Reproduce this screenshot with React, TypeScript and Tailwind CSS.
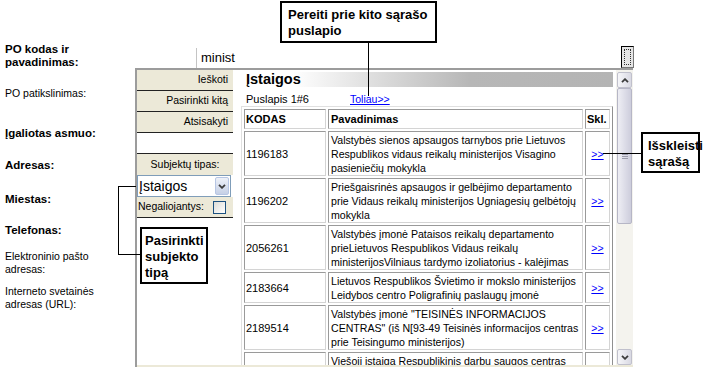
import React from "react";

type Row = {
  code: string;
  name: string[];
  link: boolean;
};

const rows: Row[] = [
  {
    code: "1196183",
    name: [
      "Valstybės sienos apsaugos tarnybos prie Lietuvos",
      "Respublikos vidaus reikalų ministerijos Visagino",
      "pasieniečių mokykla",
    ],
    link: true,
  },
  {
    code: "1196202",
    name: [
      "Priešgaisrinės apsaugos ir gelbėjimo departamento",
      "prie Vidaus reikalų ministerijos Ugniagesių gelbėtojų",
      "mokykla",
    ],
    link: true,
  },
  {
    code: "2056261",
    name: [
      "Valstybės įmonė Pataisos reikalų departamento",
      "prieLietuvos Respublikos Vidaus reikalų",
      "ministerijosVilniaus tardymo izoliatorius - kalėjimas",
    ],
    link: true,
  },
  {
    code: "2183664",
    name: [
      "Lietuvos Respublikos Švietimo ir mokslo ministerijos",
      "Leidybos centro Poligrafinių paslaugų įmonė",
    ],
    link: true,
  },
  {
    code: "2189514",
    name: [
      "Valstybės įmonė \"TEISINĖS INFORMACIJOS",
      "CENTRAS\" (iš N[93-49 Teisinės informacijos centras",
      "prie Teisingumo ministerijos)",
    ],
    link: true,
  },
  {
    code: "",
    name: ["Viešoji įstaiga Respublikinis darbų saugos centras", "", ""],
    link: false,
  },
];

function Chevron({ up }: { up?: boolean }) {
  return (
    <svg width="8" height="5" viewBox="0 0 8 5">
      <polyline
        points={up ? "1,4.2 4,1.2 7,4.2" : "1,0.8 4,3.8 7,0.8"}
        fill="none"
        stroke="#3c3c3c"
        strokeWidth="1.8"
      />
    </svg>
  );
}

function Form() {
  return (
    <div className="pl-[5px] pt-[43px]">
      <div className="flex h-[27px]">
        <div className="w-[191px] text-[11.5px] font-bold leading-[13px]">
          PO kodas ir
          <br />
          pavadinimas:
        </div>
        <div className="mt-[5px] h-[20px] w-[424px] border-l border-[#c4c4c4] pl-[4px] text-[13px] leading-[20px]">
          minist
        </div>
      </div>
      <div className="mt-[16px] text-[10.5px] leading-[14px]">PO patikslinimas:</div>
      <div className="mt-[26px] text-[11.5px] font-bold leading-[14px]">Įgaliotas asmuo:</div>
      <div className="mt-[18px] text-[11.5px] font-bold leading-[14px]">Adresas:</div>
      <div className="mt-[20px] text-[11.5px] font-bold leading-[14px]">Miestas:</div>
      <div className="mt-[17px] text-[11.5px] font-bold leading-[14px]">Telefonas:</div>
      <div className="mt-[13px] text-[10.5px] leading-[13px]">
        Elektroninio pašto
        <br />
        adresas:
      </div>
      <div className="mt-[9px] text-[10.5px] leading-[13px]">
        Interneto svetainės
        <br />
        adresas (URL):
      </div>
    </div>
  );
}

function LeftPanel() {
  return (
    <div className="w-[96px] flex flex-col text-[10.5px]">
      <div className="h-[21px] border-b border-[#222] bg-[#ece9d8] flex items-center justify-end pr-[5px]">
        Ieškoti
      </div>
      <div className="h-[21px] border-b border-[#222] bg-[#ece9d8] flex items-center justify-end pr-[5px]">
        Pasirinkti kitą
      </div>
      <div className="h-[21px] border-b border-[#222] bg-[#ece9d8] flex items-center justify-end pr-[5px]">
        Atsisakyti
      </div>
      <div className="h-[21px] border-b border-[#222]" />
      <div className="h-[21px] bg-[#ece9d8] flex items-center justify-center">
        Subjektų tipas:
      </div>
      <div className="h-[22px] border border-[#7f9db9] bg-white flex items-center pl-[1px] pr-[1px] mr-[2px]">
        <span className="flex-1 text-[14px] leading-[18px]">Įstaigos</span>
        <div className="w-[14px] h-[18px] rounded-[2px] border border-[#b7c6e4] bg-[linear-gradient(to_bottom,#eef1f8,#c6d0e6)] flex items-center justify-center">
          <Chevron />
        </div>
      </div>
      <div className="h-[21px] border-b border-[#222] bg-[#ece9d8] flex items-center pl-[1px]">
        <span>Negaliojantys:</span>
        <span className="ml-[9px] w-[13px] h-[13px] border border-[#1c5180] bg-[linear-gradient(135deg,#dcdcd7,#ffffff)]" />
      </div>
    </div>
  );
}

function Content() {
  return (
    <div className="w-[383px] h-full overflow-hidden flex flex-col">
      <div className="mt-[2px] ml-[2px] mr-[3px] h-[15px] bg-[linear-gradient(to_right,#ffffff_15%,#b7b7b7_62%,#b4b4b4)] pl-[11px] text-[14.5px] font-bold leading-[15px]">
        Įstaigos
      </div>
      <div className="h-[19px] pt-[6px] pl-[13px] flex text-[11px] leading-[13px]">
        <span className="w-[104px]">Puslapis 1#6</span>
        <span className="text-[10.5px] text-[#0000ff] underline">Toliau&gt;&gt;</span>
      </div>
      <table className="ml-[8px] w-[372px] table-fixed border-separate border-spacing-[2px] border border-t-[#e0e0e0] border-l-[#e0e0e0] border-b-[#909090] border-r-[#909090] text-[11px] leading-[14px]">
        <thead>
          <tr>
            <th className="w-[82px] h-[20px] px-[1px] text-left font-bold border border-t-[#9a9a9a] border-l-[#9a9a9a] border-b-[#d4d4d4] border-r-[#d4d4d4]">
              KODAS
            </th>
            <th className="w-[255px] h-[20px] px-[2px] text-left font-bold border border-t-[#9a9a9a] border-l-[#9a9a9a] border-b-[#d4d4d4] border-r-[#d4d4d4]">
              Pavadinimas
            </th>
            <th className="w-[25px] h-[20px] px-[1px] text-left font-bold border border-t-[#9a9a9a] border-l-[#9a9a9a] border-b-[#d4d4d4] border-r-[#d4d4d4]">
              Skl.
            </th>
          </tr>
        </thead>
        <tbody>
          {rows.map((r, i) => (
            <tr key={i}>
              <td className="px-[1px] pt-[1px] align-middle border border-t-[#9a9a9a] border-l-[#9a9a9a] border-b-[#d4d4d4] border-r-[#d4d4d4]">
                {r.code}
              </td>
              <td className="px-[2px] pt-[1px] whitespace-nowrap overflow-hidden text-[10.6px] border border-t-[#9a9a9a] border-l-[#9a9a9a] border-b-[#d4d4d4] border-r-[#d4d4d4]">
                {r.name.map((line, j) => (
                  <div key={j} className="h-[14px]">
                    {line}
                  </div>
                ))}
              </td>
              <td className="pt-[1px] text-center align-middle border border-t-[#9a9a9a] border-l-[#9a9a9a] border-b-[#d4d4d4] border-r-[#d4d4d4]">
                {r.link && (
                  <span className="text-[10.5px] text-[#0000ff] underline">&gt;&gt;</span>
                )}
              </td>
            </tr>
          ))}
        </tbody>
      </table>
    </div>
  );
}

function Scrollbar() {
  return (
    <div className="w-[17px] h-full flex flex-col bg-[#f4f3ee] pt-[2px] px-[1px]">
      <div className="h-[16px] rounded-[2px] border border-[#c0c0cc] bg-[linear-gradient(to_right,#f6f6f9,#d9d9e3)] flex items-center justify-center">
        <Chevron up />
      </div>
      <div className="h-[136px] rounded-[2px] border border-[#b6b6c6] bg-[linear-gradient(to_right,#eeeef4,#dadae6_60%,#cdcddc)] flex flex-col items-center justify-center gap-[1px]">
        <div className="w-[6px] h-px bg-[#9a9aaa]" />
        <div className="w-[6px] h-px bg-[#9a9aaa]" />
        <div className="w-[6px] h-px bg-[#9a9aaa]" />
      </div>
      <div className="flex-1" />
      <div className="h-[16px] rounded-[2px] border border-[#c0c0cc] bg-[linear-gradient(to_right,#f6f6f9,#d9d9e3)] flex items-center justify-center">
        <Chevron />
      </div>
    </div>
  );
}

function Popup() {
  return (
    <div className="absolute left-[135px] top-[68px] w-[498px] h-[299px] flex flex-col bg-white border-t-2 border-l-2 border-[#9c9c9c]">
      <div className="flex h-[295px]">
        <LeftPanel />
        <Content />
        <Scrollbar />
      </div>
      <div className="flex-1 bg-[#ece9d8]" />
    </div>
  );
}

function Callouts() {
  return (
    <>
      {/* dotted button right of the input */}
      <div className="absolute left-[621px] top-[46px] w-[13px] h-[22px] border border-t-black border-l-black border-r-[#777] border-b-[#777] bg-[#e6e6e6] p-[2px]">
        <div className="w-full h-full border border-dotted border-[#333]" />
      </div>

      <div className="absolute left-[280px] top-[1px] w-[157px] h-[42px] border-2 border-black bg-white pl-[6px] pt-[4px] text-[13px] font-bold leading-[16px]">
        Pereiti prie kito sąrašo
        <br />
        puslapio
      </div>
      <div className="absolute left-[368px] top-[43px] w-px h-[53px] bg-black" />

      <div className="absolute left-[641px] top-[132px] w-[59px] h-[41px] border-2 border-black bg-white pl-[5px] pt-[4px] text-[13px] font-bold leading-[16px]">
        Išskleisti
        <br />
        sąrašą
      </div>
      <div className="absolute left-[603px] top-[153px] w-[38px] h-px bg-black" />

      <div className="absolute left-[140px] top-[227px] w-[68px] h-[57px] border-2 border-black bg-white pl-[3px] pt-[4px] text-[13px] font-bold leading-[16px]">
        Pasirinkti
        <br />
        subjekto
        <br />
        tipą
      </div>
      <div className="absolute left-[118px] top-[186px] w-[18px] h-px bg-black" />
      <div className="absolute left-[118px] top-[186px] w-px h-[68px] bg-black" />
      <div className="absolute left-[118px] top-[254px] w-[22px] h-px bg-black" />
    </>
  );
}

export default function App() {
  return (
    <div className="relative w-[712px] h-[367px] overflow-hidden bg-white text-black font-['Liberation_Sans',Arial,sans-serif]">
      <Form />
      <Popup />
      <Callouts />
    </div>
  );
}
